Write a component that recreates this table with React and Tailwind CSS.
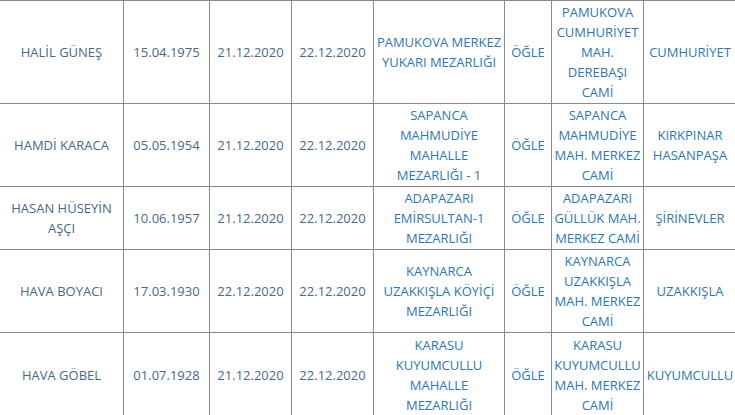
import React from "react";

const rows = [
  {
    h: "h-[103px]",
    name: ["HALİL GÜNEŞ"],
    birth: "15.04.1975",
    d1: "21.12.2020",
    d2: "22.12.2020",
    place: ["PAMUKOVA MERKEZ", "YUKARI MEZARLIĞI"],
    time: "ÖĞLE",
    mosque: ["PAMUKOVA", "CUMHURİYET", "MAH.", "DEREBAŞI", "CAMİ"],
    hood: ["CUMHURİYET"],
  },
  {
    h: "h-[83px]",
    name: ["HAMDİ KARACA"],
    birth: "05.05.1954",
    d1: "21.12.2020",
    d2: "22.12.2020",
    place: ["SAPANCA", "MAHMUDİYE", "MAHALLE", "MEZARLIĞI - 1"],
    time: "ÖĞLE",
    mosque: ["SAPANCA", "MAHMUDİYE", "MAH. MERKEZ", "CAMİ"],
    hood: ["KIRKPINAR", "HASANPAŞA"],
  },
  {
    h: "h-[63px]",
    name: ["HASAN HÜSEYİN", "AŞÇI"],
    birth: "10.06.1957",
    d1: "21.12.2020",
    d2: "22.12.2020",
    place: ["ADAPAZARI", "EMİRSULTAN-1", "MEZARLIĞI"],
    time: "ÖĞLE",
    mosque: ["ADAPAZARI", "GÜLLÜK MAH.", "MERKEZ CAMİ"],
    hood: ["ŞİRİNEVLER"],
  },
  {
    h: "h-[83px]",
    name: ["HAVA BOYACI"],
    birth: "17.03.1930",
    d1: "22.12.2020",
    d2: "22.12.2020",
    place: ["KAYNARCA", "UZAKKIŞLA KÖYİÇİ", "MEZARLIĞI"],
    time: "ÖĞLE",
    mosque: ["KAYNARCA", "UZAKKIŞLA", "MAH. MERKEZ", "CAMİ"],
    hood: ["UZAKKIŞLA"],
  },
  {
    h: "h-[84px]",
    name: ["HAVA GÖBEL"],
    birth: "01.07.1928",
    d1: "21.12.2020",
    d2: "22.12.2020",
    place: ["KARASU", "KUYUMCULLU", "MAHALLE", "MEZARLIĞI"],
    time: "ÖĞLE",
    mosque: ["KARASU", "KUYUMCULLU", "MAH. MERKEZ", "CAMİ"],
    hood: ["KUYUMCULLU"],
  },
];

function Lines({ lines }) {
  return (
    <>
      {lines.map((l, i) => (
        <div key={i} className="whitespace-nowrap">
          {l}
        </div>
      ))}
    </>
  );
}

const cell = "border border-[#8a8a8a] text-center align-middle px-0 py-0";

export default function App() {
  return (
    <div className="w-[735px] h-[415px] overflow-hidden bg-white">
      <table
        className="border-collapse table-fixed ml-[-1px] mt-0 text-[13px] leading-[20px] w-[737px]"
        style={{ fontFamily: "'Open Sans', 'Noto Sans', sans-serif" }}
      >
        <colgroup>
          <col className="w-[124px]" />
          <col className="w-[86px]" />
          <col className="w-[82px]" />
          <col className="w-[82px]" />
          <col className="w-[131px]" />
          <col className="w-[47px]" />
          <col className="w-[92px]" />
          <col className="w-[93px]" />
        </colgroup>
        <tbody>
          {rows.map((r, i) => (
            <tr key={i} className={r.h}>
              <td className={`${cell} text-[#46698a]`}>
                <Lines lines={r.name} />
              </td>
              <td className={`${cell} text-[#46698a]`}>{r.birth}</td>
              <td className={`${cell} text-[#46698a]`}>{r.d1}</td>
              <td className={`${cell} text-[#46698a]`}>{r.d2}</td>
              <td className={`${cell} text-[#2b78b8]`}>
                <Lines lines={r.place} />
              </td>
              <td className={`${cell} text-[#2b78b8]`}>{r.time}</td>
              <td className={`${cell} text-[#2b78b8]`}>
                <Lines lines={r.mosque} />
              </td>
              <td className={`${cell} text-[#2b78b8]`}>
                <Lines lines={r.hood} />
              </td>
            </tr>
          ))}
        </tbody>
      </table>
    </div>
  );
}
